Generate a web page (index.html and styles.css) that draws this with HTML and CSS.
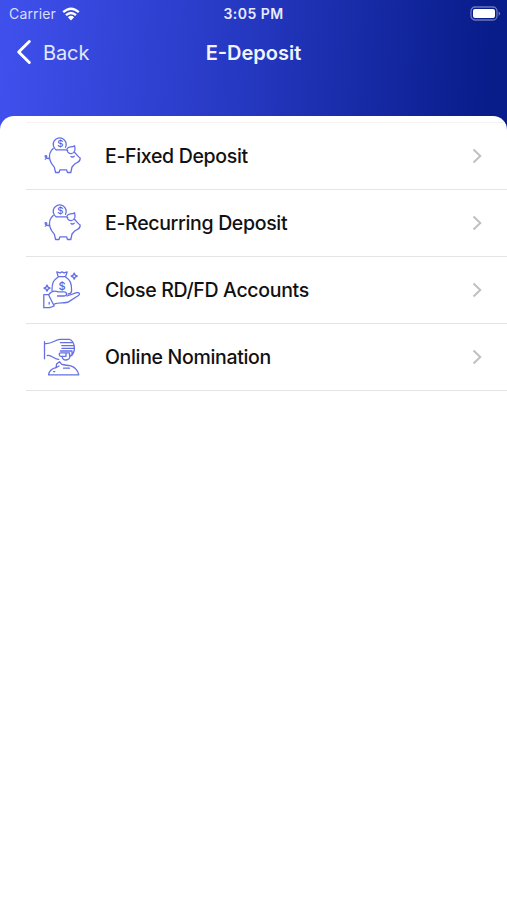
FILE: index.html
```html
<!DOCTYPE html>
<html lang="en">
<head>
    <meta charset="UTF-8">
    <meta name="viewport" content="width=device-width, initial-scale=1.0">
    <title>E-Deposit</title>
    <link rel="stylesheet" href="styles.css">
</head>
<body>
    <header class="header">
        <div class="status-bar">
            <div class="carrier">
                <span>Carrier</span>
                <svg class="wifi" viewBox="0 0 18 14" width="18" height="14">
                    <path d="M1.2 5.2Q9-1.8 16.8 5.2M4 8.2Q9 3.7 14 8.2" fill="none" stroke="#fff" stroke-width="2.3"/>
                    <path d="M5.9 10.2Q9 7.5 12.1 10.2L9 13.5Z" fill="#fff"/>
                </svg>
            </div>
            <span class="time">3:05 PM</span>
            <svg class="battery" viewBox="0 0 31 15" width="31" height="15">
                <rect x="1" y="1" width="26" height="13" rx="4" fill="none" stroke="#fff" stroke-opacity=".4" stroke-width="1.3"/>
                <rect x="3" y="3" width="22" height="9" rx="2" fill="#fff"/>
                <path d="M28.7 5.2Q31.2 7.5 28.7 9.8Z" fill="#fff" fill-opacity=".5"/>
            </svg>
        </div>
        <nav class="nav-bar">
            <a class="back-btn" href="#">
                <svg viewBox="0 0 16 26" width="16" height="26">
                    <path d="M13.3 2.5L2.7 13L13.3 23.5" fill="none" stroke="#fff" stroke-width="3" stroke-linecap="round" stroke-linejoin="round"/>
                </svg>
                <span class="back-text">Back</span>
            </a>
            <h1 class="title">E-Deposit</h1>
        </nav>
    </header>

    <main class="sheet">
        <ul class="menu">
            <li class="menu-item">
                <svg class="icon" viewBox="0 0 54 54">
                    <g id="piggy">
                        <path d="M20 20.7A6.5 6.5 0 1 1 29.5 18.3"/>
                        <path d="M17.2 19.5C13 23 13.2 28 14 31C14.8 34.5 17 36.5 18.3 38.2L19.6 43.5H23L24 40.8H30.5L31.5 43.5H34.8L36 38C37.5 36 38.7 34.4 41.5 33.4C43.5 32.6 44.2 31.3 44.2 29C42 28 40.5 25 38.4 23.3"/>
                        <path d="M20.3 20.8H29.7L31.7 21.5M31.2 19.5C32.5 17.5 35.3 18.5 38.6 16.8C39.5 20.3 39 24.2 35.3 24.7C32.5 24.7 30.2 22 31.2 19.5Z"/>
                        <path d="M35 27.4Q36.7 28.8 38.2 27.2M13.4 29.3C11 30 8.8 28.5 9.1 26.9C10.7 25.8 12 28.2 9.2 30.2"/>
                        <text x="24.2" y="18.4">$</text>
                    </g>
                </svg>
                <span class="label">E-Fixed Deposit</span>
                <svg class="chevron" viewBox="0 0 10 16"><path d="M1.5 1.5L8.3 8L1.5 14.5"/></svg>
            </li>
            <li class="menu-item">
                <svg class="icon" viewBox="0 0 54 54"><use href="#piggy"/></svg>
                <span class="label">E-Recurring Deposit</span>
                <svg class="chevron" viewBox="0 0 10 16"><path d="M1.5 1.5L8.3 8L1.5 14.5"/></svg>
            </li>
            <li class="menu-item">
                <svg class="icon" viewBox="0 0 54 54">
                    <!-- money bag -->
                    <path d="M22.2 13.7L20.8 8.9L24 9.8L26 8.9L28 9.8L31.2 8.9L29.5 13.7ZM22.2 14C17.5 17 15.8 20 16 27.5M29.6 14C34.2 17 35.7 20.2 35.6 27.3C35.6 29.8 34 31 32 31"/>
                    <text class="bag-sign" x="26" y="26.7">$</text>
                    <!-- hand -->
                    <path d="M12.8 31.7C15.5 27.9 18.5 27.5 22 28.9H28C31.3 28.9 31.3 33 28.2 33H21.5M31 33L40.5 29.7C43.5 29 44.3 31 42.5 32.5L32.5 38.9C29.5 40.6 22 39 18.5 41M7.8 31.7H12.5L18.2 43L13.5 44.7H7.8ZM13.2 39.3V41"/>
                    <!-- sparkles -->
                    <path d="M38.2 10.1L39.2 12.1L41.2 13.1L39.2 14.1L38.2 16.1L37.2 14.1L35.2 13.1L37.2 12.1ZM11 22.1L12 24.1L14 25.1L12 26.1L11 28.1L10 26.1L8 25.1L10 24.1Z"/>
                </svg>
                <span class="label">Close RD/FD Accounts</span>
                <svg class="chevron" viewBox="0 0 10 16"><path d="M1.5 1.5L8.3 8L1.5 14.5"/></svg>
            </li>
            <li class="menu-item">
                <svg class="icon" viewBox="0 0 54 54">
                    <!-- hand with coin -->
                    <path d="M8.5 11.7V28.8M8.5 13.5C15 15 19.5 9.3 24 9.3H33.5C36 9.5 38.4 14 38.4 18C38.4 22 36.8 24.5 34.8 26M11.3 25.5C15.5 24.5 18 29.3 22.8 29.3M24.4 12.7H35.8M25.8 15.6H37M26 18.4H37.6M24.4 21H36V25.3H33.5V22.8H24.8C22.5 22.8 22.8 26.3 25 26.3H30V23.8M26.2 26.5C26.2 31.5 33.8 31 33.8 26"/>
                    <!-- mound -->
                    <path d="M12.5 44.8H42.8C41.5 39.5 38 36.7 34 35.7C30.5 35 28 35.5 25.5 34.2L23.5 31.7L20.6 34.1L20 37.7C15.5 38.5 13.5 40.5 12.5 44.8ZM20 37.7L23 36M27.5 38.2H33.5M17.5 41.6H18.8"/>
                </svg>
                <span class="label">Online Nomination</span>
                <svg class="chevron" viewBox="0 0 10 16"><path d="M1.5 1.5L8.3 8L1.5 14.5"/></svg>
            </li>
        </ul>
    </main>
</body>
</html>
```

FILE: styles.css
```css
* {
    box-sizing: border-box;
}
body {
    margin: 0;
    min-height: 100vh;
    font-family: Inter, "Liberation Sans", sans-serif;
    background: #fff;
}
.header {
    height: 130px;
    color: #fff;
    background: linear-gradient(93deg, #4050ed 0%, #2437bf 50%, #081c8a 96%);
}
.status-bar {
    display: grid;
    grid-template-columns: 1fr auto 1fr;
    align-items: center;
    height: 27px;
    padding: 0 6px 0 9px;
    font-size: 14px;
}
.carrier {
    display: flex;
    align-items: center;
    gap: 6px;
    letter-spacing: 0.15px;
    color: #d9deff;
}
.time {
    margin-right: 3px;
    font-weight: 600;
    letter-spacing: 0.45px;
    color: #e8ebff;
}
.battery {
    justify-self: end;
}
.nav-bar {
    display: grid;
    grid-template-columns: 1fr auto 1fr;
    align-items: center;
    height: 50px;
    padding: 0 16px;
}
.back-btn {
    display: flex;
    align-items: center;
    gap: 11px;
    font-size: 20px;
    letter-spacing: -0.1px;
    color: #e3e7ff;
    text-decoration: none;
}
.back-text {
    padding-top: 1px;
}
.title {
    margin: 0;
    padding-top: 1px;
    font-size: 20px;
    font-weight: 600;
    color: #f1f3ff;
}
.sheet {
    min-height: 784px;
    margin-top: -14px;
    padding-top: 6px;
    background: #fff;
    border-radius: 14px 14px 0 0;
    overflow: hidden;
}
.menu {
    list-style: none;
    margin: 0 0 0 26px;
    padding: 0;
    border-top: 1px solid #f3f3f1;
}
.menu-item {
    display: flex;
    align-items: center;
    height: 67px;
    padding: 0 25px 0 10px;
    border-bottom: 1px solid #e4e4e6;
}
.icon {
    width: 54px;
    height: 54px;
    margin-right: 15px;
    fill: none;
    stroke: #6470e4;
    stroke-width: 1.3;
    stroke-linecap: round;
    stroke-linejoin: round;
}
.icon text {
    font-size: 9.5px;
    font-weight: 500;
    text-anchor: middle;
    fill: #5562e0;
    stroke: none;
}
.icon .bag-sign {
    font-size: 11px;
}
.label {
    flex: 1;
    font-size: 19.5px;
    font-weight: 500;
    letter-spacing: -0.33px;
    color: #111;
}
.chevron {
    width: 10px;
    height: 16px;
    fill: none;
    stroke: #c0c0c2;
    stroke-width: 2;
}
```
